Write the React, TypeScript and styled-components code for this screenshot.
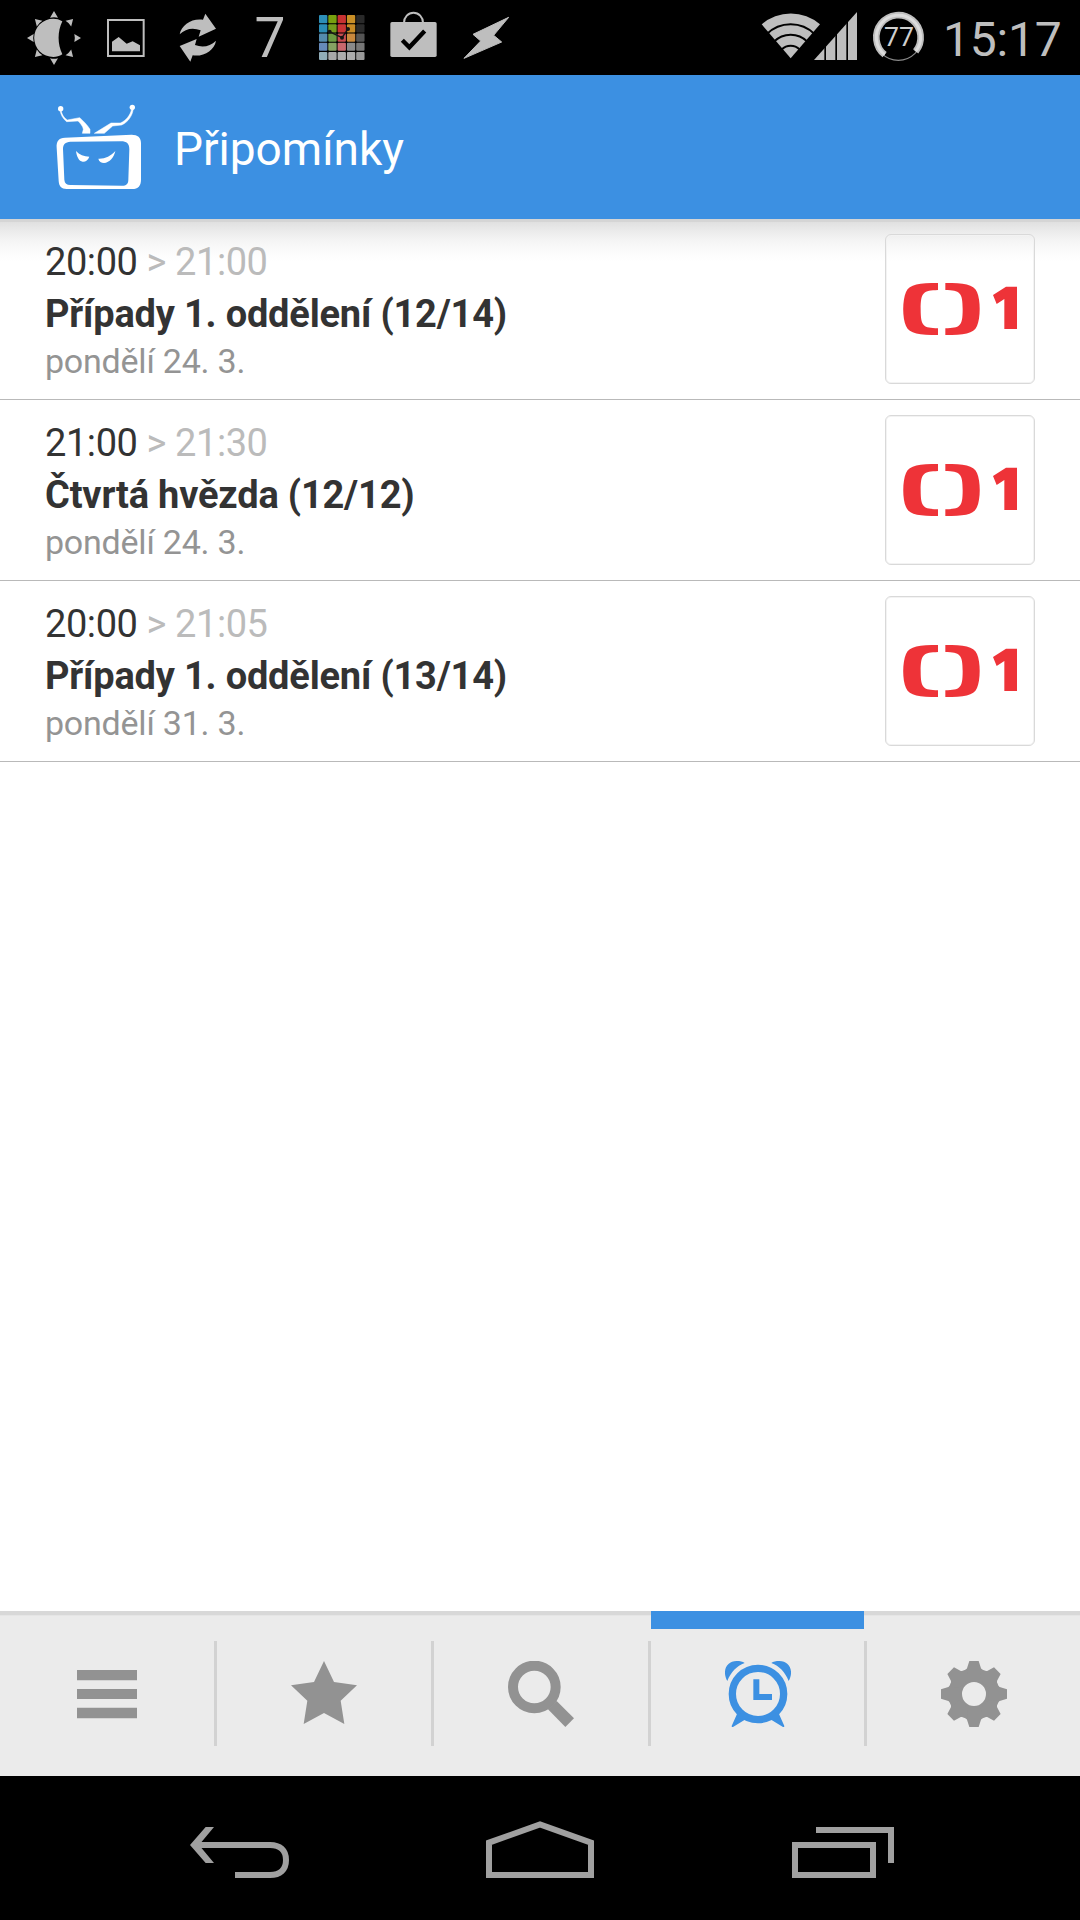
import React from 'react';
import styled, { createGlobalStyle } from 'styled-components';

const GlobalStyle = createGlobalStyle`
  * { box-sizing: border-box; }
  html, body { margin: 0; padding: 0; background: #fff; }
  svg { display: block; flex: none; }
`;

const INK = '#bebebe';
const BLUE = '#3c90e2';
const GREY = '#929292';
const NAV = '#a0a0a0';

const Screen = styled.div`
  width: 1080px;
  height: 1920px;
  display: flex;
  flex-direction: column;
  overflow: hidden;
  background: #fff;
  font-family: Roboto, 'Liberation Sans', sans-serif;
`;

const StatusBar = styled.div`
  height: 75px;
  flex: none;
  display: flex;
  justify-content: space-between;
  background: #000;
  color: ${INK};
`;

const Notifications = styled.div`
  display: flex;
  padding-left: 18px;
`;

const Count = styled.div`
  width: 72px;
  height: 75px;
  text-align: center;
  font-size: 55px;
  line-height: 76px;
`;

const System = styled.div`
  display: flex;
  width: 320px;
`;

const BatterySlot = styled.div`
  padding-left: 10px;
`;

const Clock = styled.div`
  margin-left: 17px;
  font-size: 48px;
  line-height: 79px;
  letter-spacing: -0.2px;
  white-space: nowrap;
`;

const Header = styled.header`
  height: 144px;
  flex: none;
  display: flex;
  align-items: center;
  padding-left: 48px;
  background: ${BLUE};
`;

const HeaderTitle = styled.h1`
  margin: 0 0 0 30px;
  padding-top: 4px;
  color: #fff;
  font-size: 46px;
  font-weight: 400;
  line-height: 140px;
`;

const List = styled.main`
  flex: 1;
  background: linear-gradient(
    #d5d5d5 0, #d5d5d5 3px, #e0e0e0 3px, #ebebeb 12px, #f5f5f5 22px, #fbfbfb 32px, #fff 42px
  ) no-repeat;
`;

const Row = styled.article`
  height: 181px;
  display: flex;
  justify-content: space-between;
  padding: 15px 45px 0;
  border-bottom: 1px solid #b9b9b9;
`;

const Info = styled.div`
  display: flex;
  flex-direction: column;
  white-space: nowrap;
`;

const Time = styled.div`
  height: 54px;
  font-size: 38px;
  line-height: 56px;
  letter-spacing: -0.42px;
  color: #333;
`;

const Until = styled.span`
  color: #bbb;
`;

const Programme = styled.div`
  height: 50px;
  font-size: 38px;
  font-weight: 700;
  line-height: 52px;
  letter-spacing: -0.19px;
  color: #333;
`;

const Day = styled.div`
  font-size: 34px;
  line-height: 46px;
  letter-spacing: -0.22px;
  color: #949494;
`;

const Channel = styled.div`
  width: 150px;
  height: 150px;
  border: 1px solid #d9d9d9;
  border-radius: 6px;
  box-shadow: inset 0 0 0 1px #f3f3f3;
`;

const Tabs = styled.nav`
  height: 165px;
  flex: none;
  display: grid;
  grid-template-columns: 214px 3px 214px 3px 214px 3px 213px 3px 213px;
  background: linear-gradient(#d8d8d8 4px, #e5e5e5 4px, #e5e5e5 5px, #ebebeb 5px);
`;

const Tab = styled.div<{ $active?: boolean; $nudge?: boolean }>`
  display: flex;
  justify-content: center;
  padding-top: ${(p) => (p.$active ? 32 : 50)}px;
  padding-left: ${(p) => (p.$nudge ? 1 : 0)}px;
  border-top: ${(p) => (p.$active ? `18px solid ${BLUE}` : 'none')};
`;

const Divider = styled.div`
  height: 105px;
  margin-top: 30px;
  background: #d2d2d2;
`;

const SystemNav = styled.div`
  height: 144px;
  flex: none;
  display: flex;
  padding: 0 90px;
  background: #000;
`;

const NavButton = styled.div`
  flex: 1;
  display: flex;
  justify-content: center;
`;

const SoftShape = styled.g`
  filter: blur(2px);
`;

const StatusIcon = ({ x, children }: { x: number; children: React.ReactNode }) => (
  <svg width="72" height="75" viewBox={`${x} 0 216 225`} fill={INK}>{children}</svg>
);

const EIGHTHS = [0, 45, 90, 135, 180, 225, 270, 315];

const Brightness = () => (
  <StatusIcon x={54}>
    <path d="M187 64C178 58 170 56 160 56a57 57 0 0 0 0 115c10 0 18-2 27-8C172 132 172 95 187 64z" />
    {EIGHTHS.map((a) => (
      <path key={a} d="M162 33l12 20q-12-3-24 0z" transform={`rotate(${a} 162 114)`} />
    ))}
  </StatusIcon>
);

const Picture = () => (
  <StatusIcon x={270}>
    <rect x="324" y="60" width="107" height="108" fill="none" stroke={INK} strokeWidth="6" />
    <path d="M336 154v-29l20-14 24 20 18-7 22 12v18z" />
  </StatusIcon>
);

const Sync = () => (
  <StatusIcon x={486}>
    <path d="M539 103c5-29 37-49 70-44l7-18 32 45-52 24 6-19c-23-9-46-5-63 12z" />
    <path d="M648 122c-5 29-37 49-70 44l-7 19-32-47 51-21-5 18c23 9 46 4 63-13z" />
  </StatusIcon>
);

const CELLS = [
  ['#2d8fb8', '#78a00f', '#c83232', '#c98f26', '#292929'],
  ['#2b8db6', '#739c1d', '#c93535', '#c88b25', '#2b2b2b'],
  ['#548bae', '#6b9b42', '#c94c50', '#c9893d', '#555'],
  ['#668aba', '#86a263', '#c9686d', '#8a8a8a', '#777'],
  ['#91adb8', '#a8a8a8', '#acacac', '#acacac', '#999'],
];

const ColourGrid = () => (
  <StatusIcon x={198}>
    {CELLS.map((row, r) =>
      row.map((c, i) => (
        <rect key={`${r}${i}`} x={237 + i * 27.9} y={45 + r * 27.7} width="25" height="24.5" rx="3" fill={c} />
      )),
    )}
    <path d="M268 95l38 18 18-26" fill="none" stroke="#161616" strokeWidth="4" />
    <circle cx="269" cy="95" r="6" fill="#161616" />
    <circle cx="306" cy="113" r="6" fill="#161616" />
    <circle cx="324" cy="87" r="6" fill="#161616" />
  </StatusIcon>
);

const Bag = () => (
  <StatusIcon x={414}>
    <rect x="451" y="66" width="139" height="105" rx="5" />
    <path d="M492 68a28.500 30 0 0 1 57 0" fill="none" stroke={INK} strokeWidth="6" />
    <path d="M487 121l21 21 46-49" fill="none" stroke="#000" strokeWidth="13" />
  </StatusIcon>
);

const Bolt = () => (
  <StatusIcon x={630}>
    <SoftShape>
      <path d="M806 52L699 103l23 20-50 52 113-49-24-20z" stroke={INK} strokeWidth="3" strokeLinejoin="round" />
    </SoftShape>
  </StatusIcon>
);

const Signals = () => (
  <svg width="100" height="75" viewBox="60 0 300 225" fill={INK}>
    <path d="M152 175L65 73a134 134 0 0 1 175 0z" />
    <g fill="none" stroke="#000" strokeWidth="6">
      <circle cx="152" cy="175" r="102" />
      <circle cx="152" cy="175" r="71" />
      <circle cx="152" cy="175" r="38" />
    </g>
    <path d="M222 180L351 36v144z" />
    <path d="M255.500 100v82M288.500 80v102M321.500 50v132" stroke="#000" strokeWidth="5" />
  </svg>
);

const Battery = () => (
  <svg width="56" height="75" viewBox="390 0 168 225">
    <circle cx="475" cy="110" r="71" fill="none" stroke="#8a8a8a" strokeWidth="3.500" />
    <path d="M434 164A66.500 66.500 0 1 1 527 154" fill="none" stroke="#bebebe" strokeWidth="20" />
    <path d="M434 164A66.500 66.500 0 1 1 527 154" fill="none" stroke="#dcdcdc" strokeWidth="9" />
    <text x="477" y="137" fill="#cfcfcf" fontSize="80" textAnchor="middle">77</text>
  </svg>
);

const Telly = () => (
  <svg width="96" height="96" viewBox="54 57 288 288" fill="#fff">
    <circle cx="92" cy="86" r="8" />
    <circle cx="307" cy="82" r="8" />
    <g stroke="#fff" strokeWidth="1.500">
      <path d="M90 90c2 14 9 27 20 35l34-2c7 7 15 16 16 25l-3 12h23v-12c-8-13-19-24-31-35l-37 7c-10-6-17-17-19-30z" />
      <path d="M305 86c-4 20-17 36-34 43l-28 0-50 31h30l25-22 27-3c20-9 33-29 35-50z" />
    </g>
    <path fillRule="evenodd" d="M105 173L305 164c18 0 28 8 28 25v110c0 18-8 28-27 28H110c-16 0-23-8-24-24L80 203c-1-20 6-29 25-30zM121 185c-15 1-22 8-22 22l4 92c1 11 7 16 18 16l155 2c13 0 19-6 19-18l3-91c0-17-8-24-25-24z" />
    <path d="M138 213c10 11 24 17 40 17-4 11-12 16-20 15-11-1-18-15-20-32z" />
    <path d="M256 213c-4 19-17 35-34 36-8 0-15-4-17-13 20 1 37-8 51-23z" />
  </svg>
);

const ChannelLogo = () => (
  <svg width="148" height="148" viewBox="78 75 444 444" fill="#ee3338">
    <path d="M234 219v21c-44 2-52 6-52 58s8 56 52 57v20c-55 0-86-3-96-27-11-25-11-76 0-102 10-24 41-27 96-27z" />
    <path d="M256 219v21c44 2 52 6 52 58s-8 56-52 57v20c55 0 85-3 95-27 11-25 11-76 0-102-10-24-40-27-95-27z" />
    <path d="M438 230h33v127h-38v-90l-23 15-11-27z" />
  </svg>
);

const TabIcon = ({ x, fill = GREY, children }: { x: number; fill?: string; children: React.ReactNode }) => (
  <svg width="66" height="66" viewBox={`${x} 183 198 198`} fill={fill}>{children}</svg>
);

const MenuIcon = () => (
  <TabIcon x={222}>
    <path d="M231 210h180v30.500H231zM231 267h180v30H231zM231 323.500h180v31H231z" />
  </TabIcon>
);

const StarIcon = () => (
  <TabIcon x={873}>
    <path d="M972 183l30 63 69 10-49 46 11 70-61-33-61 33 11-70-49-46 69-10z" />
  </TabIcon>
);

const SearchIcon = () => (
  <TabIcon x={234}>
    <circle cx="313" cy="261" r="64" fill="none" stroke={GREY} strokeWidth="30" />
    <path d="M380 303l52 52-26 26-52-53z" />
  </TabIcon>
);

const AlarmIcon = () => (
  <TabIcon x={885} fill={BLUE}>
    <circle cx="984" cy="282" r="77" fill="none" stroke={BLUE} strokeWidth="22" />
    <path d="M970 238h18v44h38v18h-56z" />
    <path d="M944 189c-24 9-42 28-52 54-17-30-2-60 28-60 10 0 18 2 24 6zM1024 189c24 9 42 28 52 54 17-30 2-60-28-60-10 0-18 2-24 6z" />
    <path d="M924 335l-19 43q0 4 4 3l38-23zM1044 335l19 43q0 4-4 3l-38-23z" />
  </TabIcon>
);

const GearIcon = () => (
  <TabIcon x={243}>
    <circle cx="342" cy="282" r="54" fill="none" stroke={GREY} strokeWidth="36" />
    {EIGHTHS.map((a) => (
      <path key={a} d="M328 183h28l7 22q3 6 17 9l-20 24h-36l-20-24q14-3 17-9z" transform={`rotate(${a} 342 282)`} />
    ))}
  </TabIcon>
);

const BackIcon = () => (
  <svg width="120" height="144" viewBox="60 -42 360 432">
    <path d="M116 165H330C360 165 378 180 378 210S360 255 330 255H225" fill="none" stroke={NAV} strokeWidth="18" />
    <path d="M137 111h25l-45 54 45 54h-25l-47-54z" fill={NAV} />
  </svg>
);

const HomeIcon = () => (
  <svg width="120" height="144" viewBox="960 -42 360 432">
    <path d="M987 158l153-55 153 55v97H987z" fill="none" stroke={NAV} strokeWidth="18" />
  </svg>
);

const RecentsIcon = () => (
  <svg width="120" height="144" viewBox="60 -42 360 432" fill="none" stroke={NAV} strokeWidth="18">
    <rect x="105" y="165" width="234" height="90" />
    <path d="M168 120h225v99" />
  </svg>
);

const reminders = [
  { from: '20:00', to: '21:00', title: 'Případy 1. oddělení (12/14)', day: 'pondělí 24. 3.' },
  { from: '21:00', to: '21:30', title: 'Čtvrtá hvězda (12/12)', day: 'pondělí 24. 3.' },
  { from: '20:00', to: '21:05', title: 'Případy 1. oddělení (13/14)', day: 'pondělí 31. 3.' },
];

export default function App() {
  return (
    <>
      <GlobalStyle />
      <Screen>
        <StatusBar>
          <Notifications>
            <Brightness />
            <Picture />
            <Sync />
            <Count>7</Count>
            <ColourGrid />
            <Bag />
            <Bolt />
          </Notifications>
          <System>
            <Signals />
            <BatterySlot>
              <Battery />
            </BatterySlot>
            <Clock>15:17</Clock>
          </System>
        </StatusBar>
        <Header>
          <Telly />
          <HeaderTitle>Připomínky</HeaderTitle>
        </Header>
        <List>
          {reminders.map((r) => (
            <Row key={r.title}>
              <Info>
                <Time>
                  {r.from} <Until>&gt; {r.to}</Until>
                </Time>
                <Programme>{r.title}</Programme>
                <Day>{r.day}</Day>
              </Info>
              <Channel>
                <ChannelLogo />
              </Channel>
            </Row>
          ))}
        </List>
        <Tabs>
          <Tab><MenuIcon /></Tab>
          <Divider />
          <Tab><StarIcon /></Tab>
          <Divider />
          <Tab><SearchIcon /></Tab>
          <Divider />
          <Tab $active $nudge><AlarmIcon /></Tab>
          <Divider />
          <Tab $nudge><GearIcon /></Tab>
        </Tabs>
        <SystemNav>
          <NavButton><BackIcon /></NavButton>
          <NavButton><HomeIcon /></NavButton>
          <NavButton><RecentsIcon /></NavButton>
        </SystemNav>
      </Screen>
    </>
  );
}
